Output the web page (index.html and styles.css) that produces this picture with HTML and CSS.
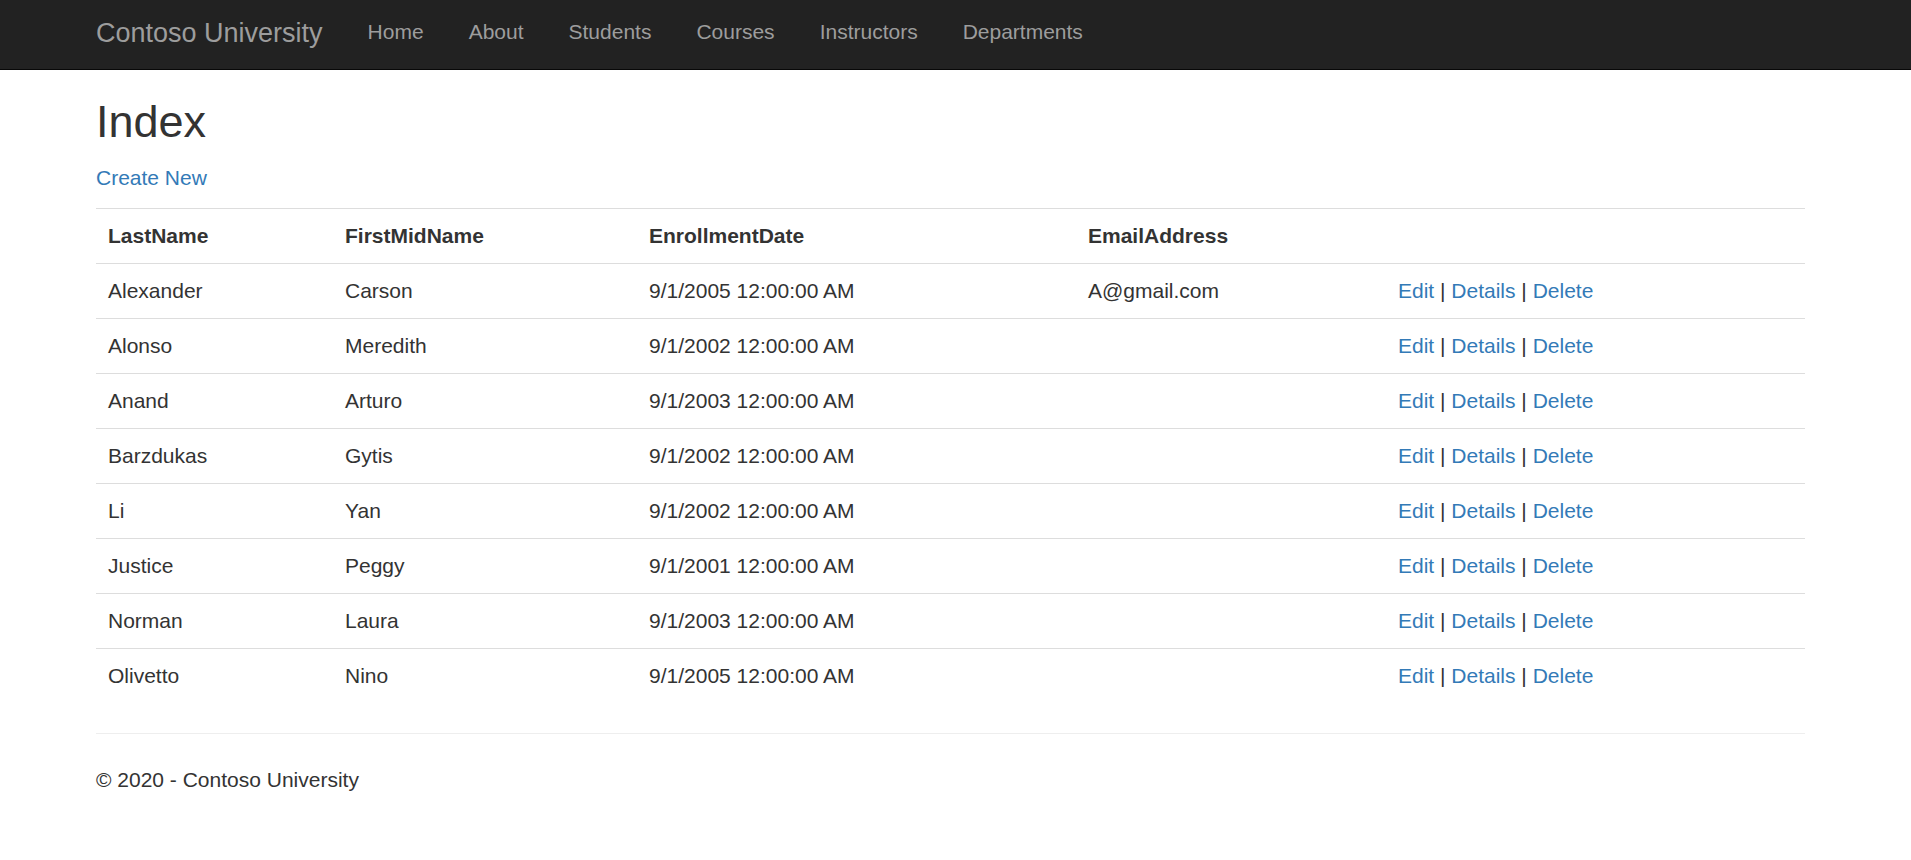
FILE: index.html
```html
<!DOCTYPE html>
<html lang="en">
<head>
<meta charset="utf-8">
<title>Index - Contoso University</title>
<link rel="stylesheet" href="styles.css">
</head>
<body>
<header class="navbar">
  <div class="navbar-inner">
    <a class="brand" href="#">Contoso University</a>
    <nav class="nav">
      <a href="#">Home</a>
      <a href="#">About</a>
      <a href="#">Students</a>
      <a href="#">Courses</a>
      <a href="#">Instructors</a>
      <a href="#">Departments</a>
    </nav>
  </div>
</header>
<main class="container">
  <h2 class="title">Index</h2>
  <p class="create"><a href="#">Create New</a></p>
  <table class="table">
    <thead>
      <tr><th>LastName</th><th>FirstMidName</th><th>EnrollmentDate</th><th>EmailAddress</th><th></th></tr>
    </thead>
    <tbody>
      <tr><td>Alexander</td><td>Carson</td><td>9/1/2005 12:00:00 AM</td><td>A@gmail.com</td><td><a href="#">Edit</a> | <a href="#">Details</a> | <a href="#">Delete</a></td></tr>
      <tr><td>Alonso</td><td>Meredith</td><td>9/1/2002 12:00:00 AM</td><td></td><td><a href="#">Edit</a> | <a href="#">Details</a> | <a href="#">Delete</a></td></tr>
      <tr><td>Anand</td><td>Arturo</td><td>9/1/2003 12:00:00 AM</td><td></td><td><a href="#">Edit</a> | <a href="#">Details</a> | <a href="#">Delete</a></td></tr>
      <tr><td>Barzdukas</td><td>Gytis</td><td>9/1/2002 12:00:00 AM</td><td></td><td><a href="#">Edit</a> | <a href="#">Details</a> | <a href="#">Delete</a></td></tr>
      <tr><td>Li</td><td>Yan</td><td>9/1/2002 12:00:00 AM</td><td></td><td><a href="#">Edit</a> | <a href="#">Details</a> | <a href="#">Delete</a></td></tr>
      <tr><td>Justice</td><td>Peggy</td><td>9/1/2001 12:00:00 AM</td><td></td><td><a href="#">Edit</a> | <a href="#">Details</a> | <a href="#">Delete</a></td></tr>
      <tr><td>Norman</td><td>Laura</td><td>9/1/2003 12:00:00 AM</td><td></td><td><a href="#">Edit</a> | <a href="#">Details</a> | <a href="#">Delete</a></td></tr>
      <tr><td>Olivetto</td><td>Nino</td><td>9/1/2005 12:00:00 AM</td><td></td><td><a href="#">Edit</a> | <a href="#">Details</a> | <a href="#">Delete</a></td></tr>
    </tbody>
  </table>
  <hr class="rule">
  <footer class="footer">
    <p>&copy; 2020 - Contoso University</p>
  </footer>
</main>
</body>
</html>
```
FILE: styles.css
```css
* { box-sizing: border-box; }
html, body { margin: 0; padding: 0; }
body {
  font-family: "Liberation Sans", Arial, Helvetica, sans-serif;
  font-size: 21px;
  line-height: 30px;
  color: #333;
  background: #fff;
}
a { color: #337ab7; text-decoration: none; }

.navbar {
  height: 70px;
  background: #222;
  border-bottom: 1px solid #080808;
}
.navbar-inner {
  display: flex;
  align-items: flex-start;
  margin-left: 96px;
}
.brand {
  display: block;
  font-size: 27px;
  line-height: 30px;
  padding: 18px 22.5px 0 0;
  color: #9d9d9d;
}
.nav { display: flex; }
.nav a {
  display: block;
  font-size: 21px;
  line-height: 30px;
  padding: 17px 22.5px 0;
  color: #9d9d9d;
}

.container {
  width: 1709px;
  margin-left: 96px;
}
.title {
  font-size: 45px;
  font-weight: 500;
  line-height: 49.5px;
  margin: 27px 0 16.5px;
}
.create { margin: 0 0 15px; }

.table {
  width: 1709px;
  border-collapse: collapse;
  border-spacing: 0;
  margin-bottom: 30px;
  table-layout: fixed;
}
.table th, .table td {
  text-align: left;
  padding: 12px;
  line-height: 30px;
  border-top: 1px solid #ddd;
  vertical-align: top;
  white-space: nowrap;
}
.table th { font-weight: bold; vertical-align: bottom; }
.table th:nth-child(1) { width: 237px; }
.table th:nth-child(2) { width: 304px; }
.table th:nth-child(3) { width: 439px; }
.table th:nth-child(4) { width: 310px; }
.table th:nth-child(5) { width: 419px; }

.rule {
  border: 0;
  border-top: 1px solid #eee;
  margin: 30px 0 31px;
  height: 0;
}
.footer p { margin: 0 0 15px; }
```
